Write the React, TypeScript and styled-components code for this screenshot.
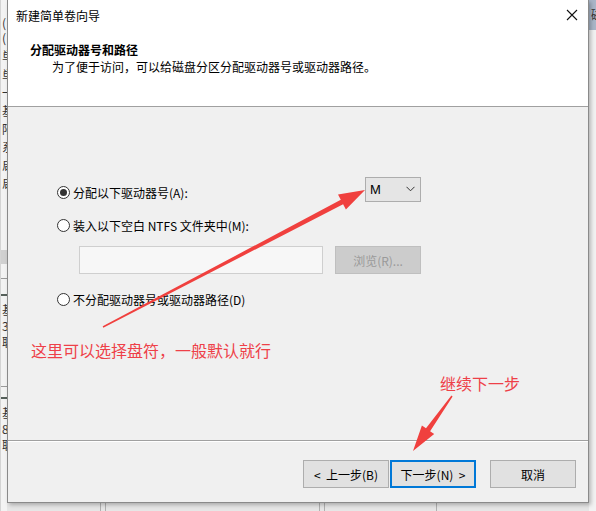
import React from "react";
import styled, { createGlobalStyle } from "styled-components";

const Global = createGlobalStyle`
  html, body { margin: 0; padding: 0; }
  body {
    width: 596px; height: 511px; overflow: hidden; background: #f0f0f0;
    font-family: "Noto Sans CJK SC", "Noto Sans", sans-serif;
    font-size: 12px; color: #000;
  }
`;

const Desktop = styled.div`
  position: relative;
  display: flex;
  width: 596px;
  height: 511px;
  overflow: hidden;
  background: #ececec;
`;

const LeftStrip = styled.div`
  width: 7px;
  box-sizing: border-box;
  flex: none;
  display: flex;
  flex-direction: column;
  background: #f3f3f3;
  overflow: hidden;
  border-left: 1px solid #d4d4d4;
`;

const StripChar = styled.div<{ $h: number; $top?: number }>`
  height: ${(p) => p.$h}px;
  margin-top: ${(p) => p.$top ?? 0}px;
  line-height: ${(p) => p.$h}px;
  font-size: 12px;
  color: #333;
  white-space: nowrap;
  margin-left: 1px;
`;

const StripBar = styled.div<{ $h: number; $top: number; $c: string }>`
  height: ${(p) => p.$h}px;
  margin-top: ${(p) => p.$top}px;
  background: ${(p) => p.$c};
  flex: none;
`;

const Center = styled.div`
  width: 582px;
  flex: none;
  display: flex;
  flex-direction: column;
`;

const Dialog = styled.div`
  height: 503px;
  box-sizing: border-box;
  border: 1px solid #8a8a8a;
  border-top: none;
  background: #f0f0f0;
  display: flex;
  flex-direction: column;
  box-shadow: 2px 2px 4px rgba(0, 0, 0, 0.25);
  position: relative;
  z-index: 1;
`;

const TitleBar = styled.div`
  height: 30px;
  display: flex;
  align-items: center;
  justify-content: space-between;
  padding-left: 8px;
  background: #fff;
`;

const TitleText = styled.span`
  font-size: 12px;
  line-height: 30px;
  padding-top: 1px;
`;

const CloseBox = styled.div`
  width: 46px;
  height: 30px;
  display: flex;
  align-items: center;
  justify-content: center;
  margin-right: -7px;
`;

const Header = styled.div`
  height: 77px;
  box-sizing: border-box;
  background: #fff;
  border-bottom: 1px solid #a0a0a0;
  padding-top: 11px;
`;

const HeaderTitle = styled.div`
  font-weight: bold;
  padding-left: 22px;
  line-height: 17px;
  font-size: 12px;
`;

const HeaderSub = styled.div`
  padding-left: 44px;
  line-height: 17px;
  font-size: 12px;
`;

const Body = styled.div`
  flex: 1;
  padding-top: 69px;
  padding-left: 49px;
`;

const Options = styled.div`
  width: 364px;
  display: flex;
  flex-direction: column;
`;

const Row = styled.div<{ $top?: number }>`
  display: flex;
  align-items: center;
  justify-content: space-between;
  margin-top: ${(p) => p.$top ?? 0}px;
`;

const RadioLabel = styled.label<{ $shift?: number }>`
  display: flex;
  align-items: center;
  height: 20px;
  gap: 3px;
  font-size: 12px;
  margin-top: ${(p) => p.$shift ?? 0}px;
`;

const RadioCircle = styled.span<{ $on?: boolean }>`
  width: 13px;
  height: 13px;
  box-sizing: border-box;
  border-radius: 50%;
  border: 1px solid #333;
  background: #fff;
  display: flex;
  align-items: center;
  justify-content: center;
  &::after {
    content: "";
    width: 7px;
    height: 7px;
    border-radius: 50%;
    background: ${(p) => (p.$on ? "#333" : "transparent")};
  }
`;

const Select = styled.div`
  width: 56px;
  height: 25px;
  box-sizing: border-box;
  border: 1px solid #adadad;
  background: #e5e5e5;
  display: flex;
  align-items: center;
  justify-content: space-between;
  padding: 0 5px 0 4px;
  font-size: 13px;
  font-family: "Liberation Sans", "Noto Sans", sans-serif;
`;

const PathRow = styled.div`
  display: flex;
  justify-content: space-between;
  margin-top: 11px;
  padding-left: 22px;
`;

const PathInput = styled.div`
  width: 244px;
  height: 28px;
  box-sizing: border-box;
  border: 1px solid #cfcfcf;
  background: #f7f7f7;
`;

const Button = styled.div<{ $w?: number; $default?: boolean; $disabled?: boolean }>`
  width: ${(p) => p.$w ?? 86}px;
  height: 28px;
  box-sizing: border-box;
  border: ${(p) => (p.$default ? "2px solid #0078d7" : p.$disabled ? "1px solid #bfbfbf" : "1px solid #adadad")};
  background: ${(p) => (p.$disabled ? "#cccccc" : "#e1e1e1")};
  color: ${(p) => (p.$disabled ? "#9a9a9a" : "#000")};
  display: flex;
  align-items: center;
  justify-content: center;
  font-size: 12px;
  white-space: pre;
`;

const FooterSep = styled.div`
  height: 1px;
  background: #a0a0a0;
  border-bottom: 1px solid #fff;
`;

const Footer = styled.div`
  display: flex;
  justify-content: flex-end;
  padding: 18px 12px 0 0;
  height: 60px;
  box-sizing: border-box;
`;

const BtnGroup = styled.div<{ $gap: number }>`
  display: flex;
  gap: ${(p) => p.$gap}px;
`;

const BottomStrip = styled.div`
  flex: 1;
  display: flex;
  background: #e6e6e6;
`;

const VLine = styled.div<{ $left: number }>`
  width: 1px;
  margin-left: ${(p) => p.$left}px;
  background: #b0b0b0;
`;

const RightStrip = styled.div`
  width: 7px;
  flex: none;
  display: flex;
  flex-direction: column;
  background: #f2f2f2;
  overflow: hidden;
`;

const RightTitle = styled.div`
  height: 30px;
  background: #a9b6c8;
  font-size: 12px;
  line-height: 30px;
  color: #333;
  padding-left: 2px;
  white-space: nowrap;
`;

const Annot = styled.div<{ $x: number; $y: number }>`
  position: absolute;
  left: ${(p) => p.$x}px;
  top: ${(p) => p.$y}px;
  color: #ee4048;
  font-size: 16px;
  line-height: 20px;
  white-space: nowrap;
  z-index: 3;
`;

const Overlay = styled.svg`
  position: absolute;
  left: 0;
  top: 0;
  z-index: 2;
  pointer-events: none;
`;

function arrow(
  x1: number, y1: number, x2: number, y2: number,
  headLen: number, headW: number, w1: number, w2: number
) {
  const dx = x2 - x1, dy = y2 - y1;
  const L = Math.hypot(dx, dy);
  const ux = dx / L, uy = dy / L;
  const nx = -uy, ny = ux;
  const bx = x2 - ux * headLen, by = y2 - uy * headLen;
  const pts = [
    [x1 + (nx * w1) / 2, y1 + (ny * w1) / 2],
    [bx + (nx * w2) / 2, by + (ny * w2) / 2],
    [bx + (nx * headW) / 2, by + (ny * headW) / 2],
    [x2, y2],
    [bx - (nx * headW) / 2, by - (ny * headW) / 2],
    [bx - (nx * w2) / 2, by - (ny * w2) / 2],
    [x1 - (nx * w1) / 2, y1 - (ny * w1) / 2],
  ];
  return pts.map((p) => p.map((v) => v.toFixed(1)).join(",")).join(" ");
}

export default function App() {
  return (
    <>
      <Global />
      <Desktop>
        <LeftStrip>
          <StripChar $h={14} $top={16}>(</StripChar>
          <StripChar $h={16}>(</StripChar>
          <StripChar $h={20}>単</StripChar>
          <StripChar $h={18}>単</StripChar>
          <StripChar $h={18}>一</StripChar>
          <StripChar $h={18}>基</StripChar>
          <StripChar $h={18}>陌</StripChar>
          <StripChar $h={18}>系</StripChar>
          <StripChar $h={18}>启</StripChar>
          <StripChar $h={18}>启</StripChar>
          <StripBar $h={14} $top={58} $c="#d0d0d0" />
          <StripBar $h={1} $top={14} $c="#9a9a9a" />
          <StripBar $h={2} $top={15} $c="#55605a" />
          <StripChar $h={16} $top={6}>基</StripChar>
          <StripChar $h={16}>3</StripChar>
          <StripChar $h={16}>联</StripChar>
          <StripBar $h={1} $top={36} $c="#9a9a9a" />
          <StripBar $h={2} $top={10} $c="#55605a" />
          <StripChar $h={16} $top={6}>基</StripChar>
          <StripChar $h={16}>8</StripChar>
          <StripChar $h={16}>联</StripChar>
        </LeftStrip>
        <Center>
          <Dialog>
            <TitleBar>
              <TitleText>新建简单卷向导</TitleText>
              <CloseBox>
                <svg width="12" height="12" viewBox="0 0 12 12">
                  <path d="M1 1 L11 11 M11 1 L1 11" stroke="#111" strokeWidth="1.1" fill="none" />
                </svg>
              </CloseBox>
            </TitleBar>
            <Header>
              <HeaderTitle>分配驱动器号和路径</HeaderTitle>
              <HeaderSub>为了便于访问，可以给磁盘分区分配驱动器号或驱动器路径。</HeaderSub>
            </Header>
            <Body>
              <Options>
                <Row>
                  <RadioLabel $shift={6}>
                    <RadioCircle $on />
                    分配以下驱动器号(A):
                  </RadioLabel>
                  <Select>
                    <span>M</span>
                    <svg width="9" height="6" viewBox="0 0 9 6">
                      <path d="M0.5 0.8 L4.5 4.8 L8.5 0.8" stroke="#333" strokeWidth="1" fill="none" />
                    </svg>
                  </Select>
                </Row>
                <Row $top={13}>
                  <RadioLabel>
                    <RadioCircle />
                    装入以下空白 NTFS 文件夹中(M):
                  </RadioLabel>
                </Row>
                <PathRow>
                  <PathInput />
                  <Button $disabled>浏览(R)...</Button>
                </PathRow>
                <Row $top={15}>
                  <RadioLabel>
                    <RadioCircle />
                    不分配驱动器号或驱动器路径(D)
                  </RadioLabel>
                </Row>
              </Options>
            </Body>
            <FooterSep />
            <Footer>
              <BtnGroup $gap={14}>
                <BtnGroup $gap={1}>
                  <Button>{"<  上一步(B)"}</Button>
                  <Button $default>{"下一步(N)  >"}</Button>
                </BtnGroup>
                <Button>取消</Button>
              </BtnGroup>
            </Footer>
          </Dialog>
          <BottomStrip>
            <VLine $left={93} />
            <VLine $left={4} />
            <VLine $left={213} />
            <VLine $left={4} />
            <VLine $left={111} />
          </BottomStrip>
        </Center>
        <RightStrip>
          <RightTitle>磁</RightTitle>
        </RightStrip>
        <Overlay width="596" height="511" viewBox="0 0 596 511">
          <polygon points={arrow(103, 327, 365, 190, 26, 17, 1.5, 5)} fill="#f0403e" />
          <polygon points={arrow(452, 396, 413, 451, 26, 15, 1.5, 5)} fill="#f0403e" />
        </Overlay>
        <Annot $x={31} $y={340}>这里可以选择盘符，一般默认就行</Annot>
        <Annot $x={440} $y={373}>继续下一步</Annot>
      </Desktop>
    </>
  );
}
